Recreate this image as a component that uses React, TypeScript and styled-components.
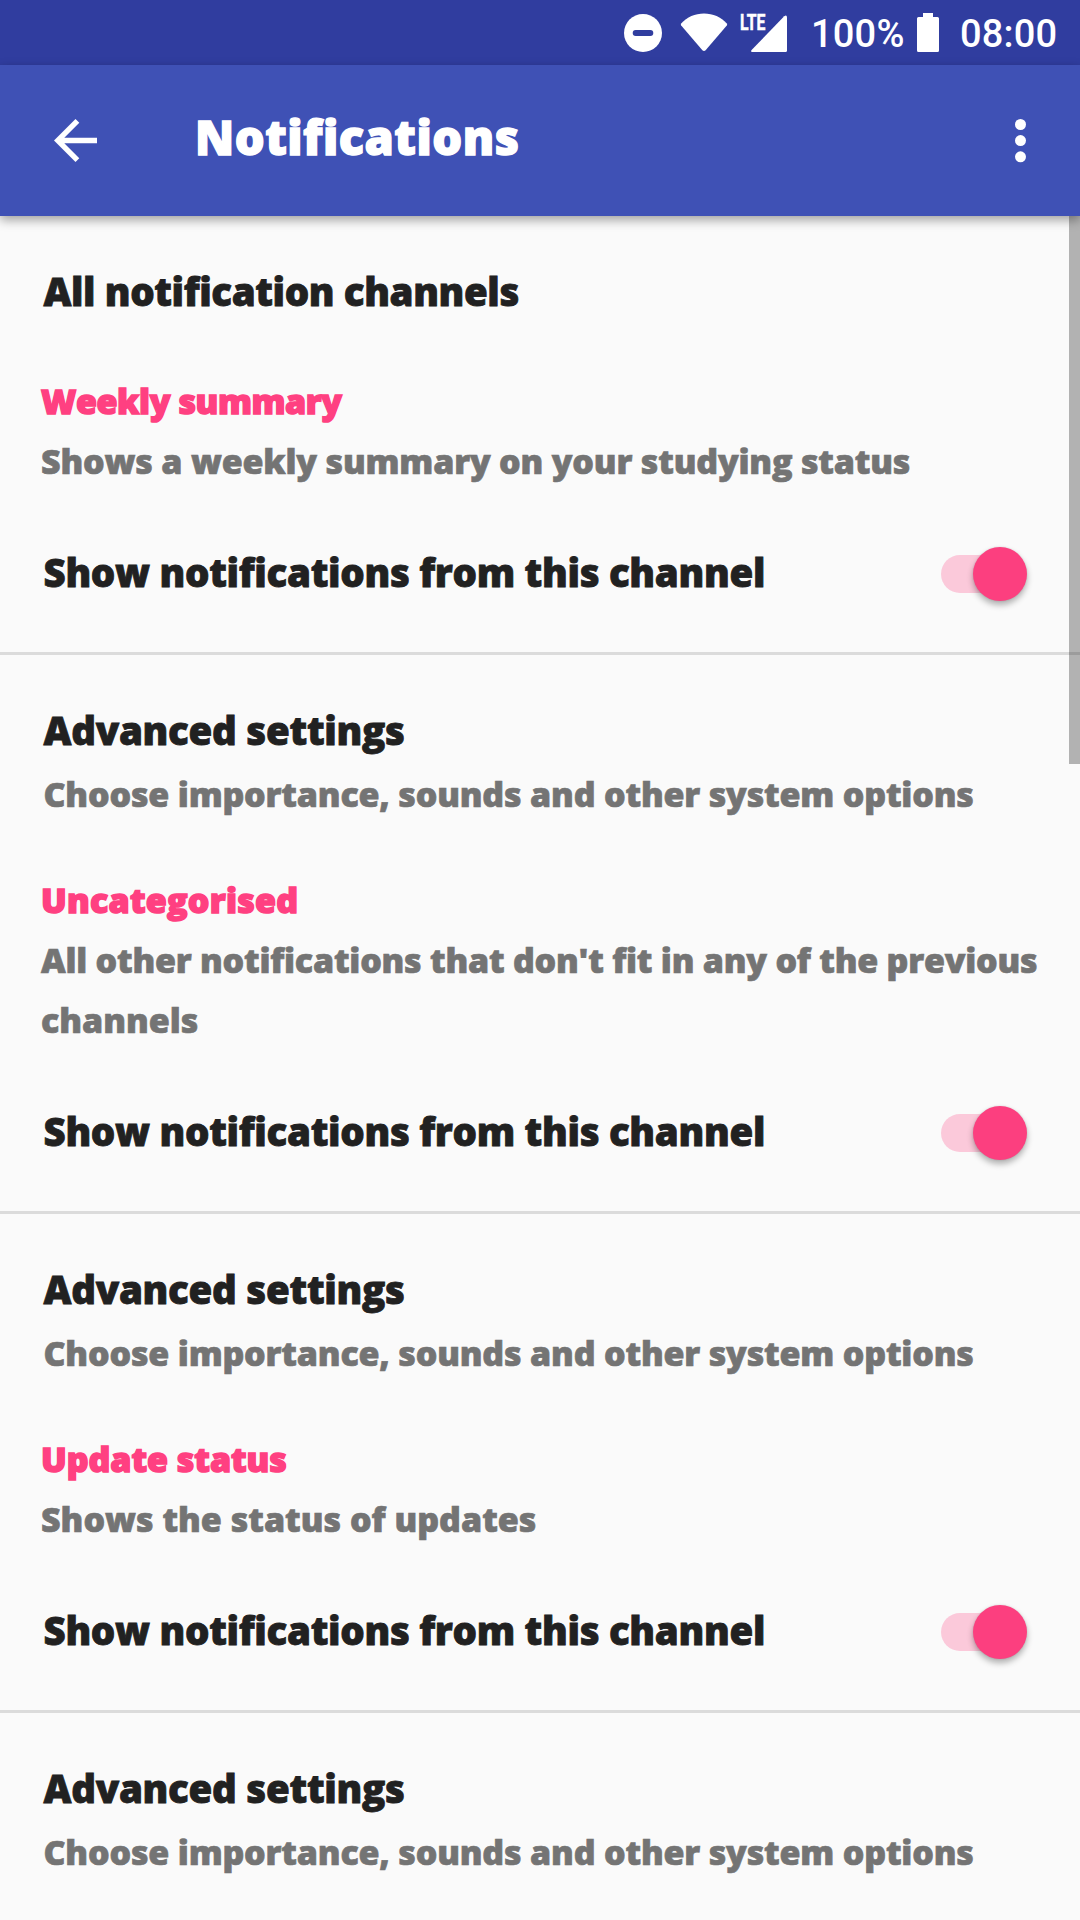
import React from "react";
import styled, { createGlobalStyle } from "styled-components";

const GlobalStyle = createGlobalStyle`
  * { box-sizing: border-box; }
  html, body { margin: 0; padding: 0; background: #fafafa; }
  body { overflow: hidden; }
`;

const Screen = styled.div`
  position: relative;
  display: flex;
  flex-direction: column;
  width: 1080px;
  height: 1920px;
  overflow: hidden;
  background: #fafafa;
  font-family: "Open Sans", "Noto Sans", sans-serif;
  font-weight: 800;
`;

const StatusBar = styled.header`
  display: flex;
  flex: none;
  align-items: center;
  justify-content: flex-end;
  height: 65px;
  padding-right: 23px;
  background: #303d9f;
  color: #fff;
  font-family: Roboto, sans-serif;
  font-weight: 500;
  font-size: 38px;
  line-height: 65px;
`;

const StatusIcon = styled.svg<{ $gap: number }>`
  flex: none;
  display: block;
  margin-right: ${(p) => p.$gap}px;
  overflow: visible;
`;

const StatusText = styled.span<{ $width: number; $gap?: number }>`
  flex: none;
  width: ${(p) => p.$width}px;
  margin-right: ${(p) => p.$gap ?? 0}px;
  padding-top: 4px;
  letter-spacing: 0.2px;
  white-space: nowrap;
`;

const AppBar = styled.div`
  position: relative;
  z-index: 1;
  display: flex;
  flex: none;
  align-items: center;
  height: 151px;
  padding: 0 54px;
  background: #3f51b5;
  color: #fff;
  box-shadow: 0 4px 10px rgba(0, 0, 0, 0.36);
`;

const IconButton = styled.button`
  display: flex;
  flex: none;
  padding: 0;
  border: 0;
  background: none;
  color: inherit;
`;

const Title = styled.h1<{ $spacing: number }>`
  flex: 1;
  margin: 0 0 8px 98px;
  font-size: 47px;
  font-weight: 800;
  line-height: 64px;
  letter-spacing: ${(p) => p.$spacing}px;
  white-space: nowrap;
  -webkit-text-stroke: 1.4px currentColor;
`;

const List = styled.main`
  display: flex;
  flex-direction: column;
  flex: 1;
  min-height: 0;
`;

const PrimaryText = styled.div<{ $spacing: number }>`
  color: #212121;
  font-size: 38.5px;
  line-height: 60px;
  letter-spacing: ${(p) => p.$spacing}px;
  white-space: nowrap;
  -webkit-text-stroke: 0.8px currentColor;
`;

const SecondaryText = styled.div<{ $spacing: number }>`
  color: #747474;
  font-size: 34px;
  line-height: 60px;
  letter-spacing: ${(p) => p.$spacing}px;
  white-space: nowrap;
  -webkit-text-stroke: 0.7px currentColor;
`;

const CategoryTitle = styled(SecondaryText)`
  color: #ff4081;
  -webkit-text-stroke: 1.5px currentColor;
`;

const AllRow = styled.div`
  flex: none;
  height: 109px;
  padding: 45px 43.5px 0;
`;

const CategoryHeader = styled.div`
  flex: none;
  padding: 46px 0 0 41px;
`;

const SwitchRow = styled.div`
  display: flex;
  flex: none;
  align-items: center;
  justify-content: space-between;
  height: 164px;
  padding: 0 52px 0 43.5px;
  border-bottom: 3px solid #dbdbdb;
`;

const AdvancedRow = styled.div`
  display: flex;
  flex-direction: column;
  flex: none;
  gap: 4px;
  padding: 45px 0 0 43.5px;
`;

const Track = styled.div`
  display: flex;
  align-items: center;
  justify-content: flex-end;
  width: 87px;
  height: 38px;
  margin-top: 5px;
  border-radius: 19px;
  background: linear-gradient(to right, #fbc9da 68px, transparent 68px);
`;

const Thumb = styled.div`
  flex: none;
  width: 54px;
  height: 54px;
  margin-right: 1px;
  border-radius: 50%;
  background: #fc3f7f;
  box-shadow: 0 4px 6px rgba(0, 0, 0, 0.3), 0 0 2px rgba(0, 0, 0, 0.12);
`;

const ScrollThumb = styled.div`
  position: absolute;
  top: 216px;
  right: 0;
  width: 11px;
  height: 548px;
  background: rgba(0, 0, 0, 0.285);
`;

type Line = { text: string; spacing: number };
type Channel = { name: Line; summary: Line[] };

const channels: Channel[] = [
  {
    name: { text: "Weekly summary", spacing: -0.42 },
    summary: [{ text: "Shows a weekly summary on your studying status", spacing: -0.19 }],
  },
  {
    name: { text: "Uncategorised", spacing: 0.22 },
    summary: [
      { text: "All other notifications that don't fit in any of the previous", spacing: -0.235 },
      { text: "channels", spacing: 0 },
    ],
  },
  {
    name: { text: "Update status", spacing: -0.05 },
    summary: [{ text: "Shows the status of updates", spacing: 0 }],
  },
];

function ChannelSection({ channel }: { channel: Channel }) {
  return (
    <>
      <CategoryHeader>
        <CategoryTitle $spacing={channel.name.spacing}>{channel.name.text}</CategoryTitle>
        {channel.summary.map((line) => (
          <SecondaryText key={line.text} $spacing={line.spacing}>
            {line.text}
          </SecondaryText>
        ))}
      </CategoryHeader>
      <SwitchRow>
        <PrimaryText $spacing={-0.32}>Show notifications from this channel</PrimaryText>
        <Track role="switch" aria-checked="true">
          <Thumb />
        </Track>
      </SwitchRow>
      <AdvancedRow>
        <PrimaryText $spacing={-0.28}>Advanced settings</PrimaryText>
        <SecondaryText $spacing={-0.19}>Choose importance, sounds and other system options</SecondaryText>
      </AdvancedRow>
    </>
  );
}

export default function App() {
  return (
    <>
      <GlobalStyle />
      <Screen>
        <StatusBar>
          <StatusIcon $gap={18} width="38" height="38" viewBox="0 0 38 38">
            <circle cx="19" cy="19" r="19" fill="#fff" />
            <rect x="8.7" y="16" width="20.6" height="6" rx="3" fill="#303d9f" />
          </StatusIcon>
          <StatusIcon $gap={12} width="48" height="40" viewBox="0 0 48 40">
            <path
              d="M1.2 10.6C7 4.2 15 .6 24 .6s17 3.6 22.8 10Q47.6 11.5 46.8 12.6L25.6 37.2Q24 38.8 22.4 37.2L1.2 12.6Q.4 11.5 1.2 10.6Z"
              fill="#fff"
            />
          </StatusIcon>
          <StatusIcon $gap={24} width="47" height="40" viewBox="0 0 47 40">
            <path d="M12.5 39Q10 39 11.6 37L44.2 3.2Q47 1.5 47 4.5V37.5Q47 39 45.5 39Z" fill="#fff" />
            <text
              x="0"
              y="17"
              fontSize="22.5"
              fontWeight="700"
              fill="#fff"
              stroke="#fff"
              strokeWidth="0.5"
              textLength="25.5"
              lengthAdjust="spacingAndGlyphs"
            >
              LTE
            </text>
          </StatusIcon>
          <StatusText $width={91} $gap={15}>100%</StatusText>
          <StatusIcon $gap={21} width="22" height="39" viewBox="0 0 22 39">
            <path d="M6 0H16V4H20.5Q22 4 22 5.5V37.5Q22 39 20.5 39H1.5Q0 39 0 37.5V5.5Q0 4 1.5 4H6Z" fill="#fff" />
          </StatusIcon>
          <StatusText $width={97}>08:00</StatusText>
        </StatusBar>
        <AppBar>
          <IconButton aria-label="Back">
            <svg width="43" height="43" viewBox="4 4 16 16">
              <path d="M20 11H7.83l5.59-5.59L12 4l-8 8 8 8 1.41-1.41L7.83 13H20v-2z" fill="currentColor" />
            </svg>
          </IconButton>
          <Title $spacing={0.5}>Notifications</Title>
          <IconButton aria-label="More options">
            <svg width="11" height="44" viewBox="0 0 11 44">
              <circle cx="5.5" cy="5.5" r="5.5" fill="currentColor" />
              <circle cx="5.5" cy="21.6" r="5.5" fill="currentColor" />
              <circle cx="5.5" cy="37.8" r="5.5" fill="currentColor" />
            </svg>
          </IconButton>
        </AppBar>
        <List>
          <AllRow>
            <PrimaryText $spacing={-0.4}>All notification channels</PrimaryText>
          </AllRow>
          {channels.map((channel) => (
            <ChannelSection key={channel.name.text} channel={channel} />
          ))}
        </List>
        <ScrollThumb />
      </Screen>
    </>
  );
}
